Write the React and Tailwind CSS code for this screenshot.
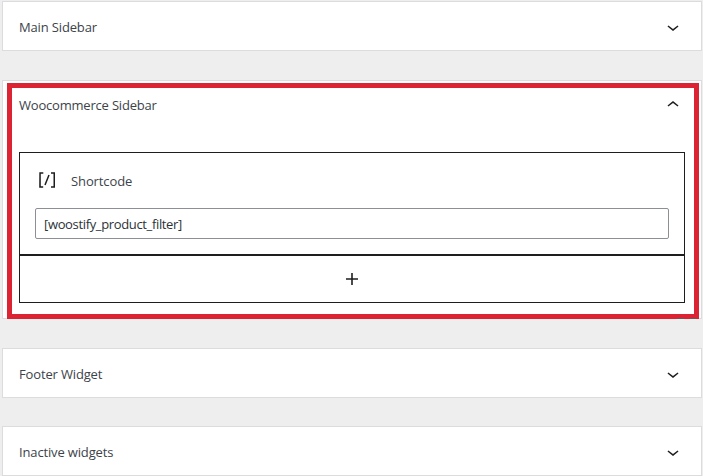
const font = { fontFamily: '"Open Sans", "Noto Sans", sans-serif' };

function ChevronDown() {
  return (
    <svg width="24" height="24" viewBox="0 0 24 24" fill="#1e1e1e">
      <path d="M17.5 11.6L12 16l-5.5-4.4.9-1.2L12 14l4.6-3.6z" />
    </svg>
  );
}

function ChevronUp() {
  return (
    <svg width="24" height="24" viewBox="0 0 24 24" fill="#1e1e1e" className="mt-px">
      <path d="M6.5 12.4L12 8l5.5 4.4-.9 1.2L12 10l-4.6 3.6-.9-1.2z" />
    </svg>
  );
}

function ShortcodeIcon() {
  return (
    <svg width="24" height="24" viewBox="0 0 24 24" fill="#1e1e1e">
      <path d="M16 4.2v1.5h2.5v12.5H16v1.5h4V4.2h-4zM4.2 19.8h4v-1.5H5.8V5.8h2.5V4.2h-4l-.1 15.6zm5.1-3.1l1.4.6 4-10-1.4-.6-4 10z" />
    </svg>
  );
}

function PlusIcon() {
  return (
    <svg width="24" height="24" viewBox="0 0 24 24" fill="#1e1e1e">
      <path d="M18 11.2h-5.2V6h-1.6v5.2H6v1.6h5.2V18h1.6v-5.2H18z" />
    </svg>
  );
}

function Panel({ title }) {
  return (
    <section className="h-[50px] border border-[#dcdcde] bg-white flex items-center justify-between pl-4 pr-4 pt-[2px]">
      <h2 className="text-[13px] tracking-[-0.15px] text-[#3c434a] mt-[2px]">{title}</h2>
      <ChevronDown />
    </section>
  );
}

export default function App() {
  return (
    <div style={font} className="relative w-[703px] h-[476px] overflow-hidden bg-[#eeeeee] pt-px pl-[2px] pr-[1px]">
      <Panel title="Main Sidebar" />

      <section className="mt-[29px] h-[239px] border border-[#dcdcde] bg-white pl-4 pr-4 relative">
        <div className="h-[71px] pt-[11px] flex items-start justify-between">
          <h2 className="text-[13px] tracking-[-0.2px] leading-[26px] text-[#3c434a]">Woocommerce Sidebar</h2>
          <ChevronUp />
        </div>

        <div className="border border-[#1e1e1e] h-[103px] px-[15px] pt-[15px]">
          <div className="flex items-center h-6 gap-3">
            <ShortcodeIcon />
            <span className="text-[13px] tracking-[-0.1px] text-[#3c434a] font-medium mt-[3px]">Shortcode</span>
          </div>
          <input
            readOnly
            value="[woostify_product_filter]"
            className="mt-4 block w-full h-[31px] border border-[#8c8f94] rounded-[2px] px-2 text-[13px] tracking-[-0.35px] text-[#2c3338] outline-none"
          />
        </div>
        <button className="-mt-px w-full h-[49px] border border-[#1e1e1e] border-t-2 flex items-center justify-center bg-white">
          <PlusIcon />
        </button>
      </section>

      <div className="mt-[29px]">
        <Panel title="Footer Widget" />
      </div>
      <div className="mt-[28px]">
        <Panel title="Inactive widgets" />
      </div>

      {/* red annotation frame drawn over the screenshot */}
      <div className="absolute left-[7px] top-[83px] w-[692px] h-[236px] border-[5px] border-[#dc2333] pointer-events-none" />
      {/* dark smudges under the frame's lower right corner */}
      <div className="absolute left-[677px] top-[318px] w-[7px] h-px bg-[#6b5a5c]" />
      <div className="absolute left-[690px] top-[318px] w-[6px] h-px bg-[#6b5a5c]" />
    </div>
  );
}
